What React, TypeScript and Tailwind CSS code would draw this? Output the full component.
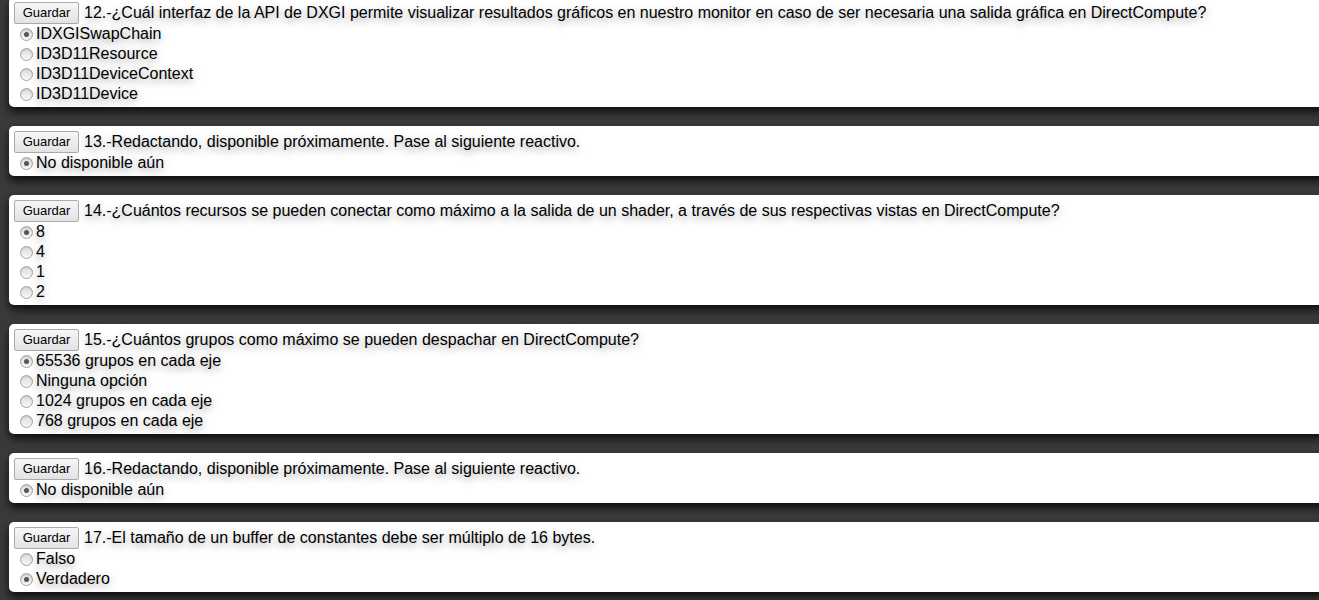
const questions = [
  {
    n: 12,
    text: "¿Cuál interfaz de la API de DXGI permite visualizar resultados gráficos en nuestro monitor en caso de ser necesaria una salida gráfica en DirectCompute?",
    options: ["IDXGISwapChain", "ID3D11Resource", "ID3D11DeviceContext", "ID3D11Device"],
    checked: 0,
  },
  {
    n: 13,
    text: "Redactando, disponible próximamente. Pase al siguiente reactivo.",
    options: ["No disponible aún"],
    checked: 0,
  },
  {
    n: 14,
    text: "¿Cuántos recursos se pueden conectar como máximo a la salida de un shader, a través de sus respectivas vistas en DirectCompute?",
    options: ["8", "4", "1", "2"],
    checked: 0,
  },
  {
    n: 15,
    text: "¿Cuántos grupos como máximo se pueden despachar en DirectCompute?",
    options: ["65536 grupos en cada eje", "Ninguna opción", "1024 grupos en cada eje", "768 grupos en cada eje"],
    checked: 0,
  },
  {
    n: 16,
    text: "Redactando, disponible próximamente. Pase al siguiente reactivo.",
    options: ["No disponible aún"],
    checked: 0,
  },
  {
    n: 17,
    text: "El tamaño de un buffer de constantes debe ser múltiplo de 16 bytes.",
    options: ["Falso", "Verdadero"],
    checked: 1,
  },
];

function Radio({ on }: { on: boolean }) {
  return (
    <span className="ml-[6px] mr-[3px] inline-flex size-[13px] shrink-0 items-center justify-center rounded-full border border-[#a3a3a3] bg-gradient-to-b from-[#dcdcdc] to-[#f8f8f8] shadow-[inset_0_1px_1px_rgba(0,0,0,0.12)]">
      {on && <span className="size-[5px] rounded-full bg-[#555]" />}
    </span>
  );
}

export default function App() {
  return (
    <div className="h-[600px] overflow-hidden bg-[#3a3a3a] font-['Liberation_Sans',Arial,sans-serif] text-[16px] text-black [text-shadow:0_3px_8px_rgba(0,0,0,0.4)]">
      <div className="-mt-[3px] flex flex-col gap-[19px]">
        {questions.map((q) => (
          <div
            key={q.n}
            className="ml-[9px] w-[1330px] rounded-[5px] bg-white pt-[5px] pb-[3px] pl-[5px] shadow-[0_5px_9px_rgba(0,0,0,0.75)]"
          >
            <div className="flex h-[22px] items-center">
              <button className="h-[22px] w-[65px] rounded-[2px] border border-[#ababab] bg-gradient-to-b from-[#f6f6f6] to-[#e3e3e3] text-[13px] text-black [text-shadow:none]">
                Guardar
              </button>
              <span className="ml-[5px] leading-5">
                {q.n}.-{q.text}
              </span>
            </div>
            {q.options.map((o, i) => (
              <div key={o} className="flex h-[20px] items-center">
                <Radio on={i === q.checked} />
                <span className="leading-5">{o}</span>
              </div>
            ))}
          </div>
        ))}
      </div>
    </div>
  );
}
